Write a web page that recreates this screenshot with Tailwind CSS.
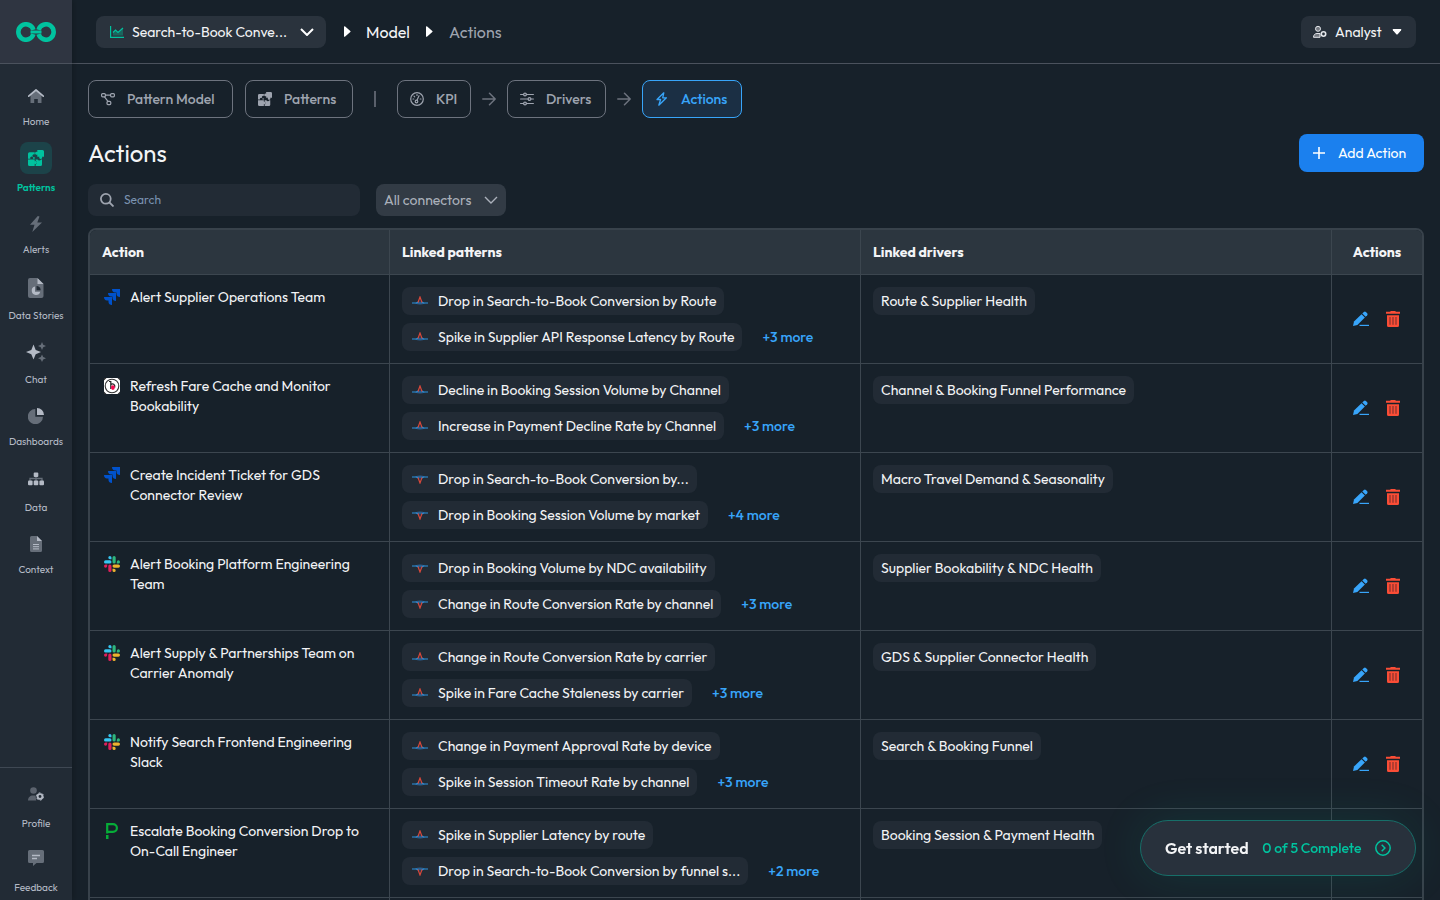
<!DOCTYPE html>
<html lang="en">
<head>
    <meta charset="UTF-8">
    <meta name="viewport" content="width=device-width, initial-scale=1.0">
    <title>Actions</title>
    <script src="https://cdn.jsdelivr.net/npm/@tailwindcss/browser@4"></script>
</head>
<body class="bg-[#17212a] text-gray-100 font-['Outfit','Lato',sans-serif] text-sm h-screen flex overflow-hidden">

    <svg class="hidden">
        <symbol id="puzzle" viewBox="0 0 16 16">
            <path fill="currentColor" d="M1.500 2.300H6.700V4.500a1.500 1.500 0 1 0 0 2.600V8.700H5a1.500 1.500 0 1 0-2.600 0H0V3.800a1.500 1.500 0 0 1 1.500-1.500z"/>
            <path fill="currentColor" d="M9.300 0H14.500A1.500 1.500 0 0 1 16 1.500V6.700H14a1.500 1.500 0 1 1-2.600 0H9.300V4.600a1.500 1.500 0 1 1 0-2.600z"/>
            <path fill="currentColor" d="M0 9.500H6.700V11.200a1.500 1.500 0 1 1 0 2.600V16H1.500A1.500 1.500 0 0 1 0 14.500z"/>
            <path fill="currentColor" d="M7.600 9.500h2a1.900 1.900 0 0 0 3.400 0H14V14.500a1.500 1.500 0 0 1-1.500 1.500H7.600v-1.600a2.100 2.100 0 0 0 0-3.800z"/>
        </symbol>
        <symbol id="user-gear" viewBox="0 0 16 16">
            <circle cx="5.500" cy="4.500" r="3.300" fill="currentColor" opacity=".4"/>
            <path fill="currentColor" opacity=".4" d="M0 14.500C0 11.500 2 9.500 5 9.500h2.500l.8 5z"/>
            <circle cx="12" cy="10.500" r="2.400" fill="none" stroke="currentColor" stroke-width="1.900"/>
            <circle cx="12" cy="10.500" r="3.600" fill="none" stroke="currentColor" stroke-width="1" stroke-dasharray="1.900 1.870"/>
        </symbol>
        <symbol id="jira" viewBox="0 0 16 16">
            <path fill="#0052cc" d="M8 0H16V8C14 8 12.500 6.800 12.500 5V3.500H11C9.200 3.500 8 2 8 0z"/>
            <path fill="#0052cc" d="M4 4H12V12C10 12 8.500 10.800 8.500 9V7.500H7C5.200 7.500 4 6 4 4z"/>
            <path fill="#0052cc" d="M0 8H8V16C6 16 4.500 14.800 4.500 13V11.500H3C1.200 11.500 0 10 0 8z"/>
        </symbol>
        <symbol id="bell" viewBox="0 0 16 16">
            <rect width="16" height="16" rx="2" fill="#fff"/>
            <circle cx="8" cy="8" r="6.800" fill="none" stroke="#333" stroke-width="1.100"/>
            <path d="M5 3.500h1.800v7.500M6.800 6.500c2-1.500 4.500 0 4 3" fill="none" stroke="#222" stroke-width="1.200"/>
            <ellipse cx="8.900" cy="9.600" rx="1.900" ry="2.400" fill="#f5094f"/>
            <path d="M0 2.500 2.500 0H0zM13.500 0 16 2.500V0zM0 13.500 2.500 16H0zM16 13.500 13.500 16H16z" fill="#333"/>
        </symbol>
        <symbol id="slack" viewBox="0 0 16 16">
            <path fill="#36c5f0" d="M5.900 0a1.600 1.600 0 1 0 0 3.200h1.600V1.600A1.600 1.600 0 0 0 5.900 0zM5.900 4.300H1.600a1.600 1.600 0 0 0 0 3.200h4.300a1.600 1.600 0 0 0 0-3.200z"/>
            <path fill="#2eb67d" d="M16 5.900a1.600 1.600 0 1 0-3.200 0v1.600h1.600A1.600 1.600 0 0 0 16 5.900zM11.700 5.900V1.600a1.600 1.600 0 0 0-3.200 0v4.300a1.600 1.600 0 0 0 3.200 0z"/>
            <path fill="#ecb22e" d="M10.100 16a1.600 1.600 0 1 0 0-3.200H8.500v1.600a1.600 1.600 0 0 0 1.600 1.600zM10.100 11.700h4.300a1.600 1.600 0 0 0 0-3.200h-4.300a1.600 1.600 0 0 0 0 3.200z"/>
            <path fill="#e01e5a" d="M0 10.100a1.600 1.600 0 1 0 3.200 0V8.500H1.600A1.600 1.600 0 0 0 0 10.100zM4.300 10.100v4.300a1.600 1.600 0 0 0 3.200 0v-4.300a1.600 1.600 0 0 0-3.200 0z"/>
        </symbol>
        <symbol id="pagerduty" viewBox="0 0 16 16">
            <path fill="none" stroke="#06ac38" stroke-width="2.200" d="M3.200 10.500V1.100H9a3.700 3.700 0 0 1 0 7.800H3.200"/>
            <path fill="#06ac38" d="M2 12h2.500V16H2z"/>
        </symbol>
        <symbol id="spike" viewBox="0 0 16 10">
            <path d="M3 7.200Q8 4 13 7.200 8 10 3 7.200z" fill="#2a5f8f"/>
            <path d="M0 7h4.500L6 6M10 6l1.500 1H16" fill="none" stroke="#2b93e0" stroke-width="1.200"/>
            <path d="M6 6.500 8 1l2 5.500" fill="none" stroke="#d9483b" stroke-width="1.200"/>
        </symbol>
        <symbol id="dip" viewBox="0 0 16 10">
            <path d="M3 2.800Q8 0 13 2.800 8 6 3 2.800z" fill="#2a5f8f"/>
            <path d="M0 3h4.500L6 4M10 4l1.500-1H16" fill="none" stroke="#2b93e0" stroke-width="1.200"/>
            <path d="M6 3.500 8 9l2-5.500" fill="none" stroke="#d9483b" stroke-width="1.200"/>
        </symbol>
    </svg>

    <!-- Sidebar -->
    <aside class="w-[72px] shrink-0 bg-[#222b35] flex flex-col text-[#b4bac5] text-[10px] leading-3 z-10 shadow-[2px_0_6px_rgba(0,0,0,0.2)]">
        <a href="#" aria-label="Main page" class="h-16 bg-[#2f3541] border-b border-[#4b525d] flex items-center justify-center">
            <svg class="w-10 h-5" viewBox="0 0 40 20" fill="none" stroke="#00c39f" stroke-width="4.600">
                <path d="M17.400 7.800A7.700 7.700 0 1 0 17.400 12.200"/>
                <path d="M22.600 7.800A7.700 7.700 0 1 1 22.600 12.200"/>
                <path d="M14.500 10h11" stroke-width="3"/>
            </svg>
        </a>
        <nav class="pt-[10px]">
            <a href="#" class="h-16 flex flex-col items-center justify-center gap-2">
                <span class="h-6 flex items-center">
                    <svg class="size-4" viewBox="0 0 16 16"><path d="M2.500 7 8 2.500 13.500 7v8H9.800v-4H6.200v4H2.500z" fill="#666e79"/><path d="M.7 8.200 8 2l7.300 6.200" fill="none" stroke="#b4bac5" stroke-width="1.700" stroke-linecap="round" stroke-linejoin="round"/></svg>
                </span>
                Home
            </a>
            <a href="#" class="h-16 pb-1 flex flex-col items-center justify-center gap-2 text-[#00c39f] font-semibold">
                <span class="size-8 shrink-0 rounded-lg bg-[#1c4349] flex items-center justify-center">
                    <svg class="size-4"><use href="#puzzle"/></svg>
                </span>
                Patterns
            </a>
            <a href="#" class="h-16 flex flex-col items-center justify-center gap-2">
                <span class="h-6 flex items-center">
                    <svg class="size-4" viewBox="0 0 16 16"><path d="M9.800 0 2 8.800h4.500L4.300 16 14 6.500H9.300L11.500.5z" fill="#666e79"/></svg>
                </span>
                Alerts
            </a>
            <a href="#" class="h-16 flex flex-col items-center justify-center gap-2">
                <span class="h-7 flex items-center">
                    <svg class="w-4 h-5" viewBox="0 0 16 20"><path d="M2 0h7l6.500 6V18a2 2 0 0 1-2 2H2a2 2 0 0 1-2-2V2a2 2 0 0 1 2-2z" fill="#666e79"/><path d="M9.500 0v6h6z" fill="#b4bac5"/><path d="M7 8.500a4.300 4.300 0 1 0 5.200 5.200H7z" fill="#b4bac5"/><path d="M8.500 8v4.200h4.200A4.200 4.200 0 0 0 8.500 8z" fill="#222b35"/></svg>
                </span>
                Data Stories
            </a>
            <a href="#" class="h-16 flex flex-col items-center justify-center gap-2">
                <span class="h-7 flex items-center">
                    <svg class="size-5" viewBox="0 0 20 20"><path d="M7.500 2.500 9.700 8l5.300 2-5.300 2.200-2.200 5.300-2.200-5.300L0 10l5.300-2z" fill="#b4bac5"/><path d="M16 0l1.200 2.800L20 4l-2.800 1.200L16 8l-1.200-2.800L12 4l2.800-1.200zM16 12.500l1.200 2.600 2.800 1.200-2.800 1.200L16 20l-1.200-2.500-2.800-1.200 2.800-1.200z" fill="#666e79"/></svg>
                </span>
                Chat
            </a>
            <a href="#" class="h-16 flex flex-col items-center justify-center gap-2">
                <span class="h-6 flex items-center">
                    <svg class="size-4" viewBox="0 0 16 16"><path d="M7.300 1v7.700H15A7.600 7.600 0 1 1 7.300 1z" fill="#666e79"/><path d="M9 0v7h7a7 7 0 0 0-7-7z" fill="#b4bac5"/></svg>
                </span>
                Dashboards
            </a>
            <a href="#" class="h-16 flex flex-col items-center justify-center gap-2">
                <span class="h-7 flex items-center">
                    <svg class="size-4" viewBox="0 0 16 16"><path d="M8 4v5M2 9V6.500h12V9" fill="none" stroke="#666e79" stroke-width="1.300"/><rect x="5.700" y=".5" width="4.600" height="4.600" rx="1" fill="#b4bac5"/><rect x="0" y="8.600" width="4.600" height="4.600" rx="1" fill="#b4bac5"/><rect x="5.700" y="8.600" width="4.600" height="4.600" rx="1" fill="#b4bac5"/><rect x="11.400" y="8.600" width="4.600" height="4.600" rx="1" fill="#b4bac5"/></svg>
                </span>
                Data
            </a>
            <a href="#" class="h-16 flex flex-col items-center justify-center gap-2">
                <span class="h-6 flex items-center">
                    <svg class="w-3 h-4" viewBox="0 0 12 16"><path d="M1.500 0H7l5 5v9.500a1.500 1.500 0 0 1-1.500 1.500h-9A1.500 1.500 0 0 1 0 14.500v-13A1.500 1.500 0 0 1 1.500 0z" fill="#666e79"/><path d="M7 0v5h5z" fill="#b4bac5"/><path d="M3 8.500h6M3 10.700h6M3 12.900h6" stroke="#b4bac5"/></svg>
                </span>
                Context
            </a>
        </nav>
        <div class="mt-auto border-t border-[#3f4853] pt-1">
            <a href="#" class="h-16 flex flex-col items-center justify-center gap-2">
                <span class="h-8 flex items-center"><svg class="size-4"><use href="#user-gear"/></svg></span>
                Profile
            </a>
            <a href="#" class="h-16 flex flex-col items-center justify-center gap-2">
                <span class="h-8 flex items-center">
                    <svg class="size-4" viewBox="0 0 16 16"><path d="M1.500 0h13A1.500 1.500 0 0 1 16 1.500v10a1.500 1.500 0 0 1-1.500 1.500H8.500L5 16v-3H1.500A1.500 1.500 0 0 1 0 11.500v-10A1.500 1.500 0 0 1 1.500 0z" fill="#666e79"/><path d="M4 5.500h8M4 8.500h5" stroke="#b4bac5" stroke-width="1.300"/></svg>
                </span>
                Feedback
            </a>
        </div>
    </aside>

    <div class="flex-1 min-w-0 flex flex-col">
        <!-- Top bar -->
        <header class="h-16 shrink-0 border-b border-[#4b525d] flex items-center px-6">
            <button class="w-[230px] h-8 rounded-lg bg-[#2a333d] flex items-center pl-[14px] pr-3 gap-2">
                <svg class="w-[14px] h-3" viewBox="0 0 14 12" fill="none" stroke="#00c39f"><path d="M.6 0v11.400H14" stroke-width="1.200"/><path d="M3 9.500V6.500L5.500 4l2.500 2.500L13 2v7.500z" fill="#00c39f" fill-opacity=".35" stroke="none"/><path d="M3 6.500 5.500 4 8 6.500 13 2" stroke-width="1.200"/></svg>
                <span class="flex-1 text-left whitespace-nowrap">Search-to-Book Conve...</span>
                <svg class="w-[14px] h-2" viewBox="0 0 14 8" fill="none" stroke="#fff" stroke-width="2"><path d="M1 1l6 6 6-6"/></svg>
            </button>
            <nav class="flex items-center text-base ml-[18px]">
                <svg class="w-[7px] h-[11px] mr-[15px]" viewBox="0 0 7 11" fill="#fff"><path d="M0 1Q0-.4 1.200.5L6.300 5q.6.500 0 1L1.200 10.500Q0 11.400 0 10z"/></svg>
                <a href="#" class="w-11">Model</a>
                <svg class="w-[7px] h-[11px] mx-4" viewBox="0 0 7 11" fill="#fff"><path d="M0 1Q0-.4 1.200.5L6.300 5q.6.500 0 1L1.200 10.500Q0 11.400 0 10z"/></svg>
                <span class="text-[#9ea4af]">Actions</span>
            </nav>
            <button class="ml-auto h-8 w-[115px] rounded-lg bg-[#27303a] flex items-center pl-3 pr-[14px] gap-2">
                <svg class="size-[14px]" viewBox="0 0 14 14" fill="none" stroke="#e5e7eb"><circle cx="5" cy="3.800" r="2.500" fill="#e5e7eb" fill-opacity=".4"/><path d="M7 8.500H4C2 8.500.5 10 .5 12.300H7z" fill="#e5e7eb" fill-opacity=".4"/><circle cx="10.500" cy="9" r="2.200" stroke-width="1.600"/></svg>
                Analyst
                <svg class="w-[10px] h-[6px] ml-auto" viewBox="0 0 10 6" fill="#fff"><path d="M1.200 0h7.600q1 .3.300 1.200L5.700 5.200q-.7.600-1.400 0L.9 1.200Q.2.300 1.200 0z"/></svg>
            </button>
        </header>

        <main class="flex-1 min-h-0 overflow-y-auto [scrollbar-width:none] p-4">
            <div class="flex items-center h-[38px] text-[#9ea4af] font-medium">
                <button class="w-[145px] h-full rounded-lg border border-[#6d737e] flex items-center gap-3 pl-3">
                    <svg class="size-[14px]" viewBox="0 0 14 14" fill="none" stroke="currentColor" stroke-width="1.200"><rect x=".6" y="1.600" width="3.800" height="3.200" rx="1"/><rect x="9.600" y="1.600" width="3.800" height="3.200" rx="1"/><rect x="6" y="9.400" width="3.800" height="3.200" rx="1"/><path d="M4.400 3.200h5.200M3.500 4.800l3.500 4.600"/></svg>
                    Pattern Model
                </button>
                <button class="w-[108px] h-full rounded-lg border border-[#6d737e] flex items-center gap-3 pl-3 ml-3">
                    <svg class="size-[14px]"><use href="#puzzle"/></svg>
                    Patterns
                </button>
                <span class="w-[2px] h-4 bg-[#5a606b] mx-[21px]"></span>
                <button class="w-[74px] h-full rounded-lg border border-[#6d737e] flex items-center gap-3 pl-3">
                    <svg class="size-[14px]" viewBox="0 0 14 14" fill="none" stroke="currentColor" stroke-width="1.200"><circle cx="7" cy="7" r="6.300"/><circle cx="6.500" cy="9.500" r="1.300"/><path d="M7 8.300l2-4.500M7 2.500v1M3 7h.8M4 4.200l.7.700M10.200 7h.8" stroke-linecap="round"/></svg>
                    KPI
                </button>
                <svg class="size-[14px] mx-[11px] text-[#6d737e]" viewBox="0 0 14 14" fill="none" stroke="currentColor" stroke-width="1.500" stroke-linecap="round" stroke-linejoin="round"><path d="M.8 7h12.400M7.500 1.300 13.200 7l-5.700 5.700"/></svg>
                <button class="w-[99px] h-full rounded-lg border border-[#6d737e] flex items-center gap-3 pl-3">
                    <svg class="size-[14px]" viewBox="0 0 14 14" fill="none" stroke="currentColor" stroke-width="1.200" stroke-linecap="round"><path d="M.6 2.500h3M6.400 2.500h7M.6 7h7.500M11 7h2.400M.6 11.500h3M6.400 11.500h7"/><circle cx="5" cy="2.500" r="1.400"/><circle cx="9.500" cy="7" r="1.400"/><circle cx="5" cy="11.500" r="1.400"/></svg>
                    Drivers
                </button>
                <svg class="size-[14px] mx-[11px] text-[#6d737e]" viewBox="0 0 14 14" fill="none" stroke="currentColor" stroke-width="1.500" stroke-linecap="round" stroke-linejoin="round"><path d="M.8 7h12.400M7.500 1.300 13.200 7l-5.700 5.700"/></svg>
                <button class="w-[100px] h-full rounded-lg border border-[#38a5fa] bg-[#1b2f44] text-[#38a5fa] flex items-center gap-3 pl-3">
                    <svg class="size-[14px]" viewBox="0 0 14 14" fill="none" stroke="currentColor" stroke-width="1.300" stroke-linejoin="round"><path d="M8.800.8 2 7.500h3.600L3.800 13.200l7.600-7.400H7.700z"/></svg>
                    Actions
                </button>
            </div>

            <div class="flex items-center justify-between mt-4 h-[38px]">
                <h1 class="text-2xl">Actions</h1>
                <button class="h-full w-[125px] rounded-lg bg-[#1b80ee] text-white flex items-center pl-[14px] gap-[13px]">
                    <svg class="size-3" viewBox="0 0 12 12" stroke="#fff" stroke-width="1.600"><path d="M6 0v12M0 6h12"/></svg>
                    Add Action
                </button>
            </div>

            <div class="flex mt-3 gap-4">
                <label class="w-[272px] h-8 rounded-lg bg-[#222b35] flex items-center pl-3 gap-[10px]">
                    <svg class="size-[14px] shrink-0" viewBox="0 0 14 14" fill="none" stroke="#9ea4af" stroke-width="1.800"><circle cx="5.800" cy="5.800" r="4.900"/><path d="M9.500 9.500l4 4"/></svg>
                    <input type="text" aria-label="Search" placeholder="Search" class="w-full text-xs outline-none placeholder:text-[#7a92b0]">
                </label>
                <button class="w-[130px] h-8 rounded-lg bg-[#323b45] text-[#abb1bb] flex items-center justify-between px-2">
                    All connectors
                    <svg class="w-[14px] h-2" viewBox="0 0 14 8" fill="none" stroke="currentColor" stroke-width="1.400"><path d="M1 1l6 6 6-6"/></svg>
                </button>
            </div>

            <div class="mt-3 rounded-lg border-2 border-[#38424b] overflow-hidden">
                <table class="w-full table-fixed border-separate border-spacing-0">
                    <thead>
                        <tr class="h-[45px] bg-[#2c363f] text-left">
                            <th class="w-[300px] px-3 font-bold border-r border-b border-[#3c464f]">Action</th>
                            <th class="px-3 font-bold border-r border-b border-[#3c464f]">Linked patterns</th>
                            <th class="px-3 font-bold border-r border-b border-[#3c464f]">Linked drivers</th>
                            <th class="w-[90px] font-bold text-center border-b border-[#3c464f]">Actions</th>
                        </tr>
                    </thead>
                    <tbody id="rows"></tbody>
                    <tfoot>
                        <tr class="h-11">
                            <td class="border-r border-[#3c464f]"></td>
                            <td class="border-r border-[#3c464f]"></td>
                            <td class="border-r border-[#3c464f]"></td>
                            <td></td>
                        </tr>
                    </tfoot>
                </table>
            </div>
        </main>
    </div>

    <button class="fixed right-6 bottom-6 z-20 h-14 w-[276px] rounded-full border border-[#176f69] bg-[#28313c] shadow-[0_0_48px_rgba(0,195,159,0.12)] flex items-center justify-between px-6">
        <span class="text-base font-semibold">Get started</span>
        <span class="text-[#00c39f] font-medium">0 of 5 Complete</span>
        <svg class="size-4" viewBox="0 0 16 16" fill="none" stroke="#00c39f" stroke-width="1.500"><circle cx="8" cy="8" r="7.200"/><path d="M6.700 4.800 9.900 8l-3.200 3.200"/></svg>
    </button>

    <script>
        const actions = [
            { icon: "jira", name: "Alert Supplier Operations Team", patterns: [["spike", "Drop in Search-to-Book Conversion by Route"], ["spike", "Spike in Supplier API Response Latency by Route"]], more: 3, driver: "Route & Supplier Health" },
            { icon: "bell", name: "Refresh Fare Cache and Monitor Bookability", patterns: [["spike", "Decline in Booking Session Volume by Channel"], ["spike", "Increase in Payment Decline Rate by Channel"]], more: 3, driver: "Channel & Booking Funnel Performance" },
            { icon: "jira", name: "Create Incident Ticket for GDS Connector Review", patterns: [["dip", "Drop in Search-to-Book Conversion by..."], ["dip", "Drop in Booking Session Volume by market"]], more: 4, driver: "Macro Travel Demand & Seasonality" },
            { icon: "slack", name: "Alert Booking Platform Engineering Team", patterns: [["dip", "Drop in Booking Volume by NDC availability"], ["dip", "Change in Route Conversion Rate by channel"]], more: 3, driver: "Supplier Bookability & NDC Health" },
            { icon: "slack", name: "Alert Supply & Partnerships Team on Carrier Anomaly", patterns: [["spike", "Change in Route Conversion Rate by carrier"], ["spike", "Spike in Fare Cache Staleness by carrier"]], more: 3, driver: "GDS & Supplier Connector Health" },
            { icon: "slack", name: "Notify Search Frontend Engineering Slack", patterns: [["spike", "Change in Payment Approval Rate by device"], ["spike", "Spike in Session Timeout Rate by channel"]], more: 3, driver: "Search & Booking Funnel" },
            { icon: "pagerduty", name: "Escalate Booking Conversion Drop to On-Call Engineer", patterns: [["spike", "Spike in Supplier Latency by route"], ["dip", "Drop in Search-to-Book Conversion by funnel s..."]], more: 2, driver: "Booking Session & Payment Health" },
        ];

        const pill = ([icon, text]) => `
            <span class="h-7 rounded-lg bg-[#222b35] flex items-center pl-[10px] pr-2 gap-[10px] whitespace-nowrap">
                <svg class="w-4 h-[10px]"><use href="#${icon}"/></svg>${text}
            </span>`;

        document.getElementById("rows").innerHTML = actions.map(a => `
            <tr class="h-[89px] align-top">
                <td class="border-r border-b border-[#3c464f] p-3">
                    <div class="flex gap-[10px] pl-[2px] leading-5">
                        <svg class="size-4 mt-[2px] shrink-0"><use href="#${a.icon}"/></svg>
                        <span>${a.name}</span>
                    </div>
                </td>
                <td class="border-r border-b border-[#3c464f] p-3">
                    <div class="flex flex-col items-start gap-2">
                        ${pill(a.patterns[0])}
                        <div class="flex items-center gap-5">
                            ${pill(a.patterns[1])}
                            <a href="#" class="text-[#38a5fa] font-medium">+${a.more} more</a>
                        </div>
                    </div>
                </td>
                <td class="border-r border-b border-[#3c464f] p-3">
                    <span class="inline-flex h-7 rounded-lg bg-[#222b35] items-center px-2">${a.driver}</span>
                </td>
                <td class="border-b border-[#3c464f] align-middle">
                    <div class="flex justify-center gap-4">
                        <button aria-label="Edit">
                            <svg class="size-4" viewBox="0 0 16 16"><path d="M0 15l1-4.500 7.500-7.300 3.400 3.300L4.400 14z" fill="#38a5fa"/><path d="M9.300 2.400 10.900.9a1.500 1.500 0 0 1 2 0l1.300 1.300a1.500 1.500 0 0 1 0 2l-1.500 1.500z" fill="#38a5fa"/><path d="M6.500 14.400H16" stroke="#38a5fa" stroke-width="1.200"/></svg>
                        </button>
                        <button aria-label="Delete">
                            <svg class="size-4" viewBox="0 0 16 16"><path d="M2 4.200h12v10.300a1.500 1.500 0 0 1-1.500 1.500h-9A1.500 1.500 0 0 1 2 14.500z" fill="#fa4d36"/><path d="M5 .800C5.300.300 5.700 0 6.200 0h3.600c.5 0 .9.300 1.200.800h4v2H1v-2z" fill="#fa4d36"/><path d="M5 6v7.800M8 6v7.800M11 6v7.800" stroke="#8f352f" stroke-width="1.300"/></svg>
                        </button>
                    </div>
                </td>
            </tr>`).join("");
    </script>
</body>
</html>
